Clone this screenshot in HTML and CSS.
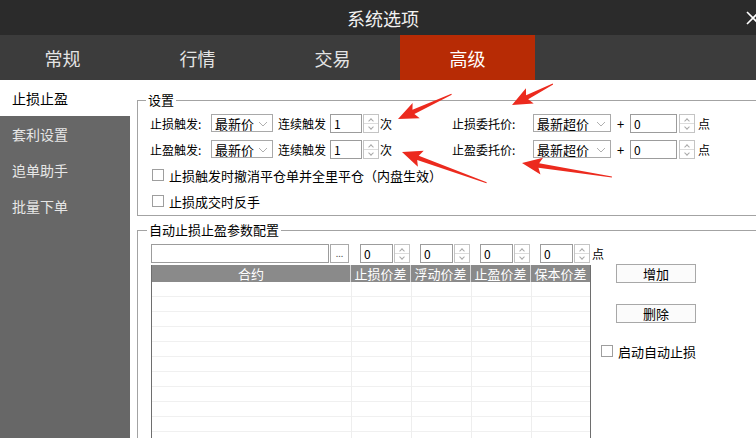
FILE: index.html
```html
<!DOCTYPE html>
<html>
	<head>
		<meta charset="UTF-8">
		<title>系统选项</title>
		<link rel="stylesheet" href="styles.css">
	</head>
	<body>
		<div class="titlebar">
			<span class="title">系统选项</span>
			<span class="close">
				<svg width="14" height="14" viewBox="0 0 14 14"><path d="M1 1L13 13M13 1L1 13" stroke="#fff" stroke-width="1.6"/></svg>
			</span>
		</div>
		<div class="tabs">
			<div class="tab first">常规</div>
			<div class="tab">行情</div>
			<div class="tab">交易</div>
			<div class="tab active">高级</div>
		</div>
		<div class="main">
			<ul class="side">
				<li class="on">止损止盈</li>
				<li>套利设置</li>
				<li>追单助手</li>
				<li>批量下单</li>
			</ul>
			<div class="content">
				<fieldset class="group g1">
					<legend>设置</legend>
					<div class="row">
						<div class="left">
							<span class="lbl">止损触发:</span>
							<span class="sel w62">最新价<svg class="dd" width="10" height="6" viewBox="0 0 10 6"><path d="M1 1L5 5L9 1" fill="none" stroke="#b0b0b0"/></svg></span>
							<span class="lbl2">连续触发</span>
							<span class="num w32">1</span>
							<span class="spin"><i class="up"></i><i class="down"></i></span>
							<span>次</span>
						</div>
						<div class="right">
							<span class="lbl3">止损委托价:</span>
							<span class="sel w78">最新超价<svg class="dd" width="10" height="6" viewBox="0 0 10 6"><path d="M1 1L5 5L9 1" fill="none" stroke="#b0b0b0"/></svg></span>
							<span class="plus">+</span>
							<span class="num w47">0</span>
							<span class="spin sp2"><i class="up"></i><i class="down"></i></span>
							<span class="unit">点</span>
						</div>
					</div>
					<div class="row">
						<div class="left">
							<span class="lbl">止盈触发:</span>
							<span class="sel w62">最新价<svg class="dd" width="10" height="6" viewBox="0 0 10 6"><path d="M1 1L5 5L9 1" fill="none" stroke="#b0b0b0"/></svg></span>
							<span class="lbl2">连续触发</span>
							<span class="num w32">1</span>
							<span class="spin"><i class="up"></i><i class="down"></i></span>
							<span>次</span>
						</div>
						<div class="right">
							<span class="lbl3">止盈委托价:</span>
							<span class="sel w78">最新超价<svg class="dd" width="10" height="6" viewBox="0 0 10 6"><path d="M1 1L5 5L9 1" fill="none" stroke="#b0b0b0"/></svg></span>
							<span class="plus">+</span>
							<span class="num w47">0</span>
							<span class="spin sp2"><i class="up"></i><i class="down"></i></span>
							<span class="unit">点</span>
						</div>
					</div>
					<div class="row check"><span class="chk"></span>止损触发时撤消平仓单并全里平仓（内盘生效）</div>
					<div class="row check"><span class="chk"></span>止损成交时反手</div>
				</fieldset>

				<fieldset class="group g2">
					<legend>自动止损止盈参数配置</legend>
					<div class="cfg">
						<div class="cfg-left">
							<div class="inrow">
								<span class="num w178"></span>
								<span class="more">...</span>
								<span class="num w33 first">0</span>
								<span class="spin"><i class="up"></i><i class="down"></i></span>
								<span class="num w33">0</span>
								<span class="spin"><i class="up"></i><i class="down"></i></span>
								<span class="num w33">0</span>
								<span class="spin"><i class="up"></i><i class="down"></i></span>
								<span class="num w33">0</span>
								<span class="spin"><i class="up"></i><i class="down"></i></span>
								<span class="unit">点</span>
							</div>
							<div class="table">
								<div class="thead">
									<span>合约</span>
									<span>止损价差</span>
									<span>浮动价差</span>
									<span>止盈价差</span>
									<span>保本价差</span>
								</div>
								<div class="tbody"></div>
							</div>
						</div>
						<div class="cfg-right">
							<div class="btn">增加</div>
							<div class="btn">删除</div>
							<div class="row check auto"><span class="chk"></span>启动自动止损</div>
						</div>
					</div>
				</fieldset>
			</div>
		</div>

		<svg class="arrows" width="756" height="438" viewBox="0 0 756 438">
			<g fill="#ec2a1e">
				<polygon transform="translate(398 119) rotate(155.2)" points="0,0 -20,-8.5 -17,-2.3 -59,-0.5 -59,0.5 -17,2.3 -20,8.5"/>
				<polygon transform="translate(512 105) rotate(152.9)" points="0,0 -20,-8.5 -17,-2.3 -46,-0.5 -46,0.5 -17,2.3 -20,8.5"/>
				<polygon transform="translate(402 152) rotate(-160)" points="0,0 -20,-8.5 -17,-2.3 -90,-0.5 -90,0.5 -17,2.3 -20,8.5"/>
				<polygon transform="translate(522 163) rotate(-171.2)" points="0,0 -20,-8.5 -17,-2.3 -91,-0.5 -91,0.5 -17,2.3 -20,8.5"/>
			</g>
		</svg>
	</body>
</html>
```

FILE: styles.css
```css
*{
	box-sizing: border-box;
}
body{
	margin: 0;
	width: 756px;
	height: 438px;
	overflow: hidden;
	position: relative;
	font-family: "Noto Sans CJK SC", "Liberation Sans", sans-serif;
	font-size: 12px;
	color: #000;
	background: #fff;
}

/* 标题栏 */
.titlebar{
	height: 35px;
	background: #2b2b2b;
	display: flex;
	align-items: center;
	justify-content: center;
	position: relative;
	padding-left: 10px;
}
.title{
	color: #f2f2f2;
	font-size: 18px;
}
.close{
	position: absolute;
	right: -4px;
	top: 11px;
	display: flex;
}

/* 顶部选项卡 */
.tabs{
	height: 45px;
	background: #3c3c3c;
	display: flex;
}
.tab{
	width: 135px;
	flex-shrink: 0;
	display: flex;
	align-items: center;
	justify-content: center;
	color: #e4e4e4;
	font-size: 18px;
}
.tab.first{
	width: 130px;
	padding-right: 5px;
}
.tab.active{
	background: #b72b05;
	color: #fff;
}

.main{
	display: flex;
	height: 358px;
}

/* 左侧菜单 */
.side{
	width: 130px;
	margin: 0;
	padding: 0;
	list-style: none;
	background: #676767;
	flex-shrink: 0;
}
.side li{
	height: 36px;
	line-height: 36px;
	padding-left: 12px;
	font-size: 14px;
	color: #e6e6e6;
}
.side li.on{
	background: #fff;
	color: #000;
}

.content{
	flex: 1;
	overflow: hidden;
	padding-left: 7px;
}

/* 分组框 */
.group{
	border: 1px solid #a3a3a3;
	margin: 0;
	min-width: 0;
}
.group legend{
	font-size: 13px;
	line-height: 14px;
	padding: 0 2px;
	margin-left: -4px;
}
.g1{
	width: 660px;
	margin-top: 13px;
	padding: 3px 0 1px 12px;
}
.g2{
	width: 660px;
	height: 260px;
	margin-top: 7px;
	padding: 7px 0 0 13px;
}

.row{
	height: 26px;
	display: flex;
	align-items: center;
	white-space: nowrap;
}
.row > *,
.left > *,
.right > *,
.inrow > *{
	flex-shrink: 0;
}
.left{
	width: 302px;
	display: flex;
	align-items: center;
}
.right{
	display: flex;
	align-items: center;
}
.lbl{
	width: 61px;
}
.lbl2{
	width: 52px;
	margin-left: 5px;
}
.lbl3{
	width: 81px;
}
.plus{
	width: 19px;
	text-align: center;
	font-size: 13px;
}
.unit{
	margin-left: 2px;
}

/* 下拉框 / 输入框 / 微调 */
.sel{
	height: 18px;
	border: 1px solid #a9a9a9;
	display: flex;
	align-items: center;
	padding-left: 3px;
	font-size: 13px;
	position: relative;
}
.sel .dd{
	position: absolute;
	right: 4px;
	top: 6px;
}
.w62{ width: 62px; }
.w78{ width: 78px; }
.num{
	height: 19px;
	border: 1px solid #9c9c9c;
	padding-left: 3px;
	line-height: 17px;
	font-size: 12px;
	background: #fff;
}
.w32{ width: 32px; }
.w33{ width: 33px; }
.w47{ width: 47px; }
.w178{ width: 178px; }
.spin{
	width: 16px;
	height: 19px;
	border: 1px solid #c4c4c4;
	margin: 0 1px;
	display: flex;
	flex-direction: column;
}
.spin.sp2{
	margin-left: 2px;
}
.spin i{
	flex: 1;
	position: relative;
}
.spin i.up{
	border-bottom: 1px solid #dcdcdc;
}
.spin i::after{
	content: "";
	position: absolute;
	left: 5px;
	width: 3px;
	height: 3px;
	border: solid #a8a8a8;
}
.spin i.up::after{
	top: 4px;
	border-width: 1px 0 0 1px;
	transform: rotate(45deg);
}
.spin i.down::after{
	top: 1px;
	border-width: 0 1px 1px 0;
	transform: rotate(45deg);
}

/* 复选框 */
.check{
	font-size: 13px;
}
.chk{
	width: 12px;
	height: 12px;
	border: 1px solid #9e9e9e;
	margin: 0 5px 0 2px;
}

/* 参数配置 */
.cfg{
	display: flex;
}
.cfg-left{
	width: 450px;
	flex-shrink: 0;
}
.inrow{
	display: flex;
	align-items: center;
	height: 19px;
	margin-bottom: 2px;
	white-space: nowrap;
}
.inrow .spin{
	margin: 0 0 0 1px;
}
.more{
	width: 19px;
	height: 19px;
	border: 1px solid #a9a9a9;
	margin-left: 1px;
	text-align: center;
	font-size: 9px;
	line-height: 17px;
	color: #555;
}
.inrow .num.w33{
	margin-left: 10px;
}
.inrow .num.first{
	margin-left: 11px;
}

.table{
	width: 440px;
	border-left: 1px solid #6e6e6e;
	border-right: 1px solid #6e6e6e;
}
.thead{
	display: grid;
	grid-template-columns: 199px 60px 60px 60px 59px;
	height: 17px;
	background: #8a8a8a;
}
.thead span{
	color: #fff;
	text-align: center;
	line-height: 17px;
	font-size: 13px;
	border-right: 1px solid #d8d8d8;
}
.thead span:last-child{
	border-right: 0;
}
.tbody{
	height: 160px;
	background-image:
		linear-gradient(#eeeeee, #eeeeee),
		linear-gradient(#eeeeee, #eeeeee),
		linear-gradient(#eeeeee, #eeeeee),
		linear-gradient(#eeeeee, #eeeeee),
		repeating-linear-gradient(to bottom, transparent 0 14px, #f0f0f0 14px 15px);
	background-size: 1px 100%, 1px 100%, 1px 100%, 1px 100%, 100% 100%;
	background-position: 199px 0, 259px 0, 319px 0, 379px 0, 0 0;
	background-repeat: no-repeat;
}

.cfg-right{
	padding-top: 20px;
}
.btn{
	width: 80px;
	height: 19px;
	margin-left: 15px;
	border: 1px solid #a8a8a8;
	background: #fbfbfb;
	text-align: center;
	line-height: 17px;
	font-size: 13px;
	margin-bottom: 21px;
}
.check.auto{
	height: 14px;
	margin-top: 5px;
}
.check.auto .chk{
	margin-left: 0;
}

/* 红色箭头标注 */
.arrows{
	position: absolute;
	left: 0;
	top: 0;
	pointer-events: none;
}
```
